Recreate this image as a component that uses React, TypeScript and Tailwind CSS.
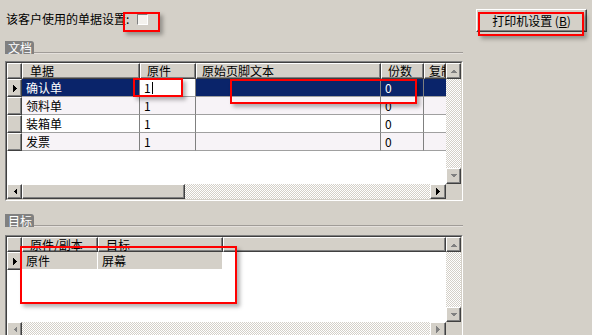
import React from 'react';

const raised =
  'bg-[#d4d0c8] border border-t-white border-l-white border-r-[#404040] border-b-[#404040] shadow-[inset_-1px_-1px_0_#808080]';
const checker =
  'bg-[#d4d0c8] bg-[image:repeating-conic-gradient(#ffffff_0%_25%,#d4d0c8_0%_50%)] bg-[length:2px_2px]';

type Dir = 'up' | 'down' | 'left' | 'right';

function Arrow({ dir, dim = false }: { dir: Dir; dim?: boolean }) {
  const fill = dim ? '#808080' : '#000000';
  const pts: Record<Dir, string> = {
    up: '0,4 7,4 3.5,0.5',
    down: '0,0 7,0 3.5,3.5',
    left: '4,0 4,7 0.5,3.5',
    right: '0,0 0,7 3.5,3.5',
  };
  const vert = dir === 'up' || dir === 'down';
  return (
    <svg width={vert ? 7 : 4} height={vert ? 4 : 7} viewBox={vert ? '0 0 7 4' : '0 0 4 7'} shapeRendering="crispEdges">
      <polygon points={pts[dir]} fill={fill} />
    </svg>
  );
}

function ScrollBtn({ dir, dim, className = '' }: { dir: Dir; dim?: boolean; className?: string }) {
  return (
    <div className={`${raised} flex items-center justify-center shrink-0 ${className}`}>
      <Arrow dir={dir} dim={dim} />
    </div>
  );
}

function Pointer() {
  return (
    <svg width="4" height="7" viewBox="0 0 4 7" shapeRendering="crispEdges">
      <polygon points="0,0 0,7 4,3.5" fill="#000" />
    </svg>
  );
}

function GroupLabel({ text }: { text: string }) {
  return (
    <div className="ml-[5px] flex h-[13px] w-[458px] items-end">
      <div className="h-[13px] w-[29px] rounded-tr-[3px] bg-[#808080] pl-[3px] text-[12px] leading-[13px] text-white">
        {text}
      </div>
      <div className="h-[2px] flex-1 border-t border-t-[#a09c98] border-b border-b-[#e4e0dc]" />
    </div>
  );
}

function Frame({ className, children }: { className: string; children: React.ReactNode }) {
  return (
    <div className={`ml-[5px] w-[458px] border border-t-[#808080] border-l-[#808080] border-r-white border-b-white ${className}`}>
      <div className="flex h-full w-full border border-t-[#404040] border-l-[#404040] border-r-[#d4d0c8] border-b-[#d4d0c8] bg-white">
        {children}
      </div>
    </div>
  );
}

function HeadCell({ w, pl, children }: { w: string; pl: string; children?: React.ReactNode }) {
  return (
    <div className={`${raised} ${w} ${pl} flex h-full shrink-0 items-center overflow-hidden whitespace-nowrap text-[12px] leading-[14px] text-black`}>
      {children}
    </div>
  );
}

const docRows = [
  { name: '确认单', orig: '1', copies: '0', bg: 'bg-[#0a246a] text-white' },
  { name: '领料单', orig: '1', copies: '0', bg: 'bg-[#f7f3f7] text-black' },
  { name: '装箱单', orig: '1', copies: '0', bg: 'bg-white text-black' },
  { name: '发票', orig: '1', copies: '0', bg: 'bg-[#f7f3f7] text-black' },
];

const cell = 'flex h-full shrink-0 items-center border-r border-r-[#808080] border-b border-b-[#a0a0a0] px-[4px] text-[12px] leading-[14px]';

function DocGrid() {
  return (
    <Frame className="mt-[7px] h-[140px]">
      <div className="flex w-[439px] flex-col">
        <div className="flex h-[16px]">
          <HeadCell w="w-[15px]" pl="" />
          <HeadCell w="w-[118px]" pl="pl-[7px]">单据</HeadCell>
          <HeadCell w="w-[56px]" pl="pl-[6px]">原件</HeadCell>
          <HeadCell w="w-[185px]" pl="pl-[5px]">原始页脚文本</HeadCell>
          <HeadCell w="w-[43px]" pl="pl-[6px]">份数</HeadCell>
          <HeadCell w="w-[22px]" pl="pl-[4px]">复制</HeadCell>
        </div>
        {docRows.map((r, i) => (
          <div key={r.name} className={`flex h-[18px] ${r.bg}`}>
            <div className={`${raised} flex h-full w-[15px] shrink-0 items-center justify-center`}>
              {i === 0 && <Pointer />}
            </div>
            <div className={`${cell} w-[118px]`}>{r.name}</div>
            {i === 0 ? (
              <div className={`${cell} w-[56px] bg-white text-black`}>
                {r.orig}
                <span className="ml-[1px] inline-block h-[12px] w-[1px] bg-black" />
              </div>
            ) : (
              <div className={`${cell} w-[56px]`}>{r.orig}</div>
            )}
            <div className={`${cell} w-[185px]`} />
            <div className={`${cell} w-[43px]`}>{r.copies}</div>
            <div className={`${cell} w-[22px] border-r-0`} />
          </div>
        ))}
        <div className="flex-1 bg-white" />
        <div className="flex h-[15px]">
          <ScrollBtn dir="left" className="h-[15px] w-[15px]" />
          <div className={`${raised} h-[15px] w-[163px] shrink-0`} />
          <div className={`${checker} flex-1`} />
          <ScrollBtn dir="right" className="h-[15px] w-[16px]" />
        </div>
      </div>
      <div className="flex w-[15px] flex-col">
        <ScrollBtn dir="up" dim className="h-[16px] w-[15px]" />
        <div className={`${checker} flex-1`} />
        <ScrollBtn dir="down" dim className="h-[16px] w-[15px]" />
        <div className="h-[15px] bg-[#d4d0c8]" />
      </div>
    </Frame>
  );
}

function TargetGrid() {
  const gcell = 'flex h-full shrink-0 items-center border-r border-r-white border-b border-b-white bg-[#d4d0c8] px-[4px] text-[12px] leading-[14px] text-black';
  return (
    <Frame className="mt-[8px] h-[104px]">
      <div className="flex w-[439px] flex-col">
        <div className="flex h-[15px]">
          <HeadCell w="w-[15px]" pl="" />
          <HeadCell w="w-[76px]" pl="pl-[7px]">原件/副本</HeadCell>
          <HeadCell w="w-[125px]" pl="pl-[7px]">目标</HeadCell>
          <HeadCell w="w-[223px]" pl="" />
        </div>
        <div className="flex h-[18px] bg-white">
          <div className={`${raised} flex h-full w-[15px] shrink-0 items-center justify-center`}>
            <Pointer />
          </div>
          <div className={`${gcell} w-[76px]`}>原件</div>
          <div className={`${gcell} w-[125px]`}>屏幕</div>
        </div>
        <div className="flex-1 bg-white" />
        <div className="flex h-[15px]">
          <ScrollBtn dir="left" dim className="h-[15px] w-[15px]" />
          <div className={`${checker} flex-1`} />
          <ScrollBtn dir="right" dim className="h-[15px] w-[16px]" />
        </div>
      </div>
      <div className="flex w-[15px] flex-col">
        <ScrollBtn dir="up" dim className="h-[15px] w-[15px]" />
        <div className={`${checker} flex-1`} />
        <ScrollBtn dir="down" dim className="h-[15px] w-[15px]" />
        <div className="h-[15px] bg-[#d4d0c8]" />
      </div>
    </Frame>
  );
}

function RedBox({ className }: { className: string }) {
  return (
    <div
      className={`pointer-events-none absolute border-2 border-[#ff0000] shadow-[3px_3px_4px_rgba(0,0,0,0.3)] ${className}`}
    />
  );
}

export default function App() {
  return (
    <div className="relative h-[335px] w-[592px] overflow-hidden bg-[#d4d0c8] font-['Noto_Sans_CJK_SC','Liberation_Sans',sans-serif] text-black">
      {/* top bar */}
      <div className="flex h-[41px] items-start justify-between">
        <div className="flex items-center pl-[6px] pt-[13px]">
          <span className="text-[12px] leading-[12px]">该客户使用的单据设置:</span>
          <div className="ml-[8px] h-[11px] w-[11px] border border-t-[#808080] border-l-[#808080] border-r-white border-b-white bg-[#f4f2ee]" />
        </div>
        <button className={`${raised} mr-[5px] mt-[9px] flex h-[23px] w-[111px] items-center justify-center whitespace-pre text-[12px] leading-[12px] text-black`}>
          打印机设置 (<span className="underline">B</span>)
        </button>
      </div>

      <GroupLabel text="文档" />
      <DocGrid />

      <div className="h-[13px]" />
      <GroupLabel text="目标" />
      <TargetGrid />

      {/* annotations */}
      <RedBox className="left-[123px] top-[12px] h-[20px] w-[37px]" />
      <RedBox className="left-[478px] top-[12px] h-[24px] w-[106px]" />
      <RedBox className="left-[133px] top-[78px] h-[19px] w-[50px]" />
      <RedBox className="left-[230px] top-[79px] h-[25px] w-[187px]" />
      <RedBox className="left-[20px] top-[246px] h-[58px] w-[217px]" />
    </div>
  );
}
